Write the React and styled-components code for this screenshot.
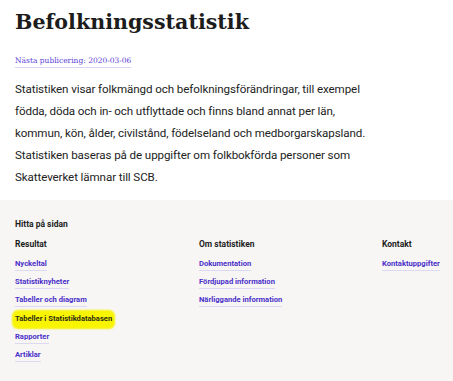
import React from "react";
import styled, { createGlobalStyle } from "styled-components";

const Global = createGlobalStyle`
  html, body { margin: 0; padding: 0; background: #ffffff; }
  body { width: 453px; overflow: hidden; }
`;

const Page = styled.div`
  width: 453px;
  height: 381px;
  display: flex;
  flex-direction: column;
  overflow: hidden;
`;

const Intro = styled.section`
  padding: 8px 15px 0 15px;
  height: 200px;
  box-sizing: border-box;
  display: flex;
  flex-direction: column;
  align-items: flex-start;
`;

const Title = styled.h1`
  margin: 0;
  font-family: "DejaVu Serif", "Liberation Serif", serif;
  font-weight: 700;
  font-size: 20.6px;
  line-height: 28px;
  color: #1c1c1c;
`;

const PubLink = styled.a`
  display: inline-block;
  margin-top: 19px;
  font-family: "DejaVu Serif", "Liberation Serif", serif;
  font-size: 7.5px;
  line-height: 12px;
  color: #5b3ed6;
  text-decoration: none;
  border-bottom: 1px solid #dcd6f6;
`;

const Lead = styled.p`
  margin: 10px 0 0 0;
  width: 360px;
  font-family: Roboto, "Liberation Sans", sans-serif;
  font-size: 11.6px;
  letter-spacing: -0.1px;
  line-height: 22px;
  color: #222222;
`;

const Footer = styled.nav`
  flex: 1;
  background: #f7f6f5;
  padding: 18px 15px 0 15px;
  font-family: Roboto, "Liberation Sans", sans-serif;
`;

const FooterHead = styled.div`
  font-size: 8.5px;
  font-weight: 700;
  color: #1d1d1d;
  line-height: 12px;
`;

const Columns = styled.div`
  display: grid;
  grid-template-columns: 184px 183px 1fr;
  margin-top: 8px;
`;

const Column = styled.div`
  display: flex;
  flex-direction: column;
  align-items: flex-start;
`;

const ColTitle = styled.div`
  font-size: 8.5px;
  font-weight: 700;
  color: #1d1d1d;
  line-height: 12px;
  margin-bottom: 8px;
`;

const LinkItem = styled.a`
  font-size: 7.6px;
  font-weight: 700;
  line-height: 12px;
  margin-bottom: 5.2px;
  color: ${(p) => (p.$marked ? "#2e2e14" : "#4b2fc9")};
  text-decoration: none;
  border-bottom: 1px solid ${(p) => (p.$marked ? "transparent" : "#ded9f3")};
  background: ${(p) => (p.$marked ? "#f9f400" : "transparent")};
  box-shadow: ${(p) => (p.$marked ? "0 0 2px 3px #f9f400" : "none")};
  border-radius: ${(p) => (p.$marked ? "3px" : "0")};
`;

const columns = [
  {
    title: "Resultat",
    links: [
      "Nyckeltal",
      "Statistiknyheter",
      "Tabeller och diagram",
      "Tabeller i Statistikdatabasen",
      "Rapporter",
      "Artiklar",
    ],
  },
  {
    title: "Om statistiken",
    links: ["Dokumentation", "Fördjupad information", "Närliggande information"],
  },
  { title: "Kontakt", links: ["Kontaktuppgifter"] },
];

export default function App() {
  return (
    <Page>
      <Global />
      <Intro>
        <Title>Befolkningsstatistik</Title>
        <PubLink href="#">Nästa publicering: 2020-03-06</PubLink>
        <Lead>
          Statistiken visar folkmängd och befolkningsförändringar, till exempel
          födda, döda och in- och utflyttade och finns bland annat per län,
          kommun, kön, ålder, civilstånd, födelseland och medborgarskapsland.
          Statistiken baseras på de uppgifter om folkbokförda personer som
          Skatteverket lämnar till SCB.
        </Lead>
      </Intro>
      <Footer>
        <FooterHead>Hitta på sidan</FooterHead>
        <Columns>
          {columns.map((c) => (
            <Column key={c.title}>
              <ColTitle>{c.title}</ColTitle>
              {c.links.map((l) => (
                <LinkItem
                  key={l}
                  href="#"
                  $marked={l === "Tabeller i Statistikdatabasen"}
                >
                  {l}
                </LinkItem>
              ))}
            </Column>
          ))}
        </Columns>
      </Footer>
    </Page>
  );
}
